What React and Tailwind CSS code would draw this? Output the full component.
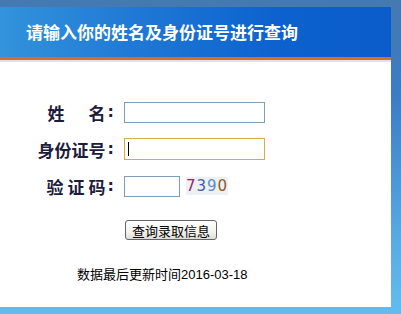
import React from "react";

const cjk = { fontFamily: '"Noto Sans CJK SC", "Noto Sans", sans-serif' };

function Label({ children }) {
  return (
    <div
      className="w-[87px] shrink-0 whitespace-nowrap flex justify-end items-center text-[17px] font-bold leading-none text-[#1c1c3c]"
      style={cjk}
    >
      {children}
      <span className="ml-[2px] text-[16px]" style={{ fontFamily: '"DejaVu Sans", sans-serif' }}>:</span>
    </div>
  );
}

export default function App() {
  return (
    <div className="w-[401px] h-[314px] overflow-hidden bg-[linear-gradient(180deg,#4579b0_0%,#3c7cc4_30%,#5aaee6_80%,#62bcf0_100%)] pt-[7px] pr-[10px]">
      <div className="w-[391px] h-[300px] bg-white flex flex-col">
        <div className="h-[50px] flex items-center pl-[26px] bg-[linear-gradient(90deg,#3393dc_0%,#1f78d4_35%,#0d62cf_70%,#0a5ccb_100%)]">
          <span className="text-white text-[17px] font-bold" style={cjk}>
            请输入你的姓名及身份证号进行查询
          </span>
        </div>
        <div className="h-[3px] bg-[#df6a22]" />
        <div className="h-[2px] bg-[#dde3ee]" />
        <div className="flex flex-col pt-[39px] pl-[27px]">
          <div className="flex items-center gap-[10px] h-[22px]">
            <Label>
              <span>姓</span>
              <span className="w-[24px]" />
              <span>名</span>
            </Label>
            <div className="w-[141px] h-[21px] border border-[#7f9db9] bg-white" />
          </div>
          <div className="flex items-center gap-[10px] h-[22px] mt-[15px]">
            <Label>身份证号</Label>
            <div className="w-[141px] h-[22px] border border-[#d9ac4a] bg-white flex items-center pl-[3px]">
              <div className="w-[1px] h-[14px] bg-black" />
            </div>
          </div>
          <div className="flex items-center gap-[10px] h-[22px] mt-[15px]">
            <Label>
              <span>验</span>
              <span className="w-[4px]" />
              <span>证</span>
              <span className="w-[4px]" />
              <span>码</span>
            </Label>
            <div className="w-[56px] h-[21px] border border-[#7f9db9] bg-white" />
            <div
              className="ml-[-4px] h-[18px] w-[42px] bg-[#eef0f3] flex items-center justify-center text-[15px] leading-none tracking-[1px]"
              style={{ fontFamily: '"DejaVu Sans", sans-serif' }}
            >
              <span className="text-[#8c2c70]">7</span>
              <span className="text-[#3a62a6]">3</span>
              <span className="text-[#5a8ccc]">9</span>
              <span className="text-[#8c5a28]">0</span>
            </div>
          </div>
          <div className="mt-[23px] pl-[98px]">
            <div
              className="w-[92px] h-[20px] rounded-[3px] border border-[#5f6670] bg-[linear-gradient(180deg,#ffffff_0%,#f4f3ee_60%,#dedcd4_100%)] flex items-center justify-center text-[13px] leading-none text-black"
              style={cjk}
            >
              查询录取信息
            </div>
          </div>
          <div className="mt-[27px] pl-[50px] text-[13px] leading-none text-black" style={cjk}>
            数据最后更新时间<span style={{ fontFamily: '"Liberation Sans", sans-serif' }}>2016-03-18</span>
          </div>
        </div>
      </div>
    </div>
  );
}
